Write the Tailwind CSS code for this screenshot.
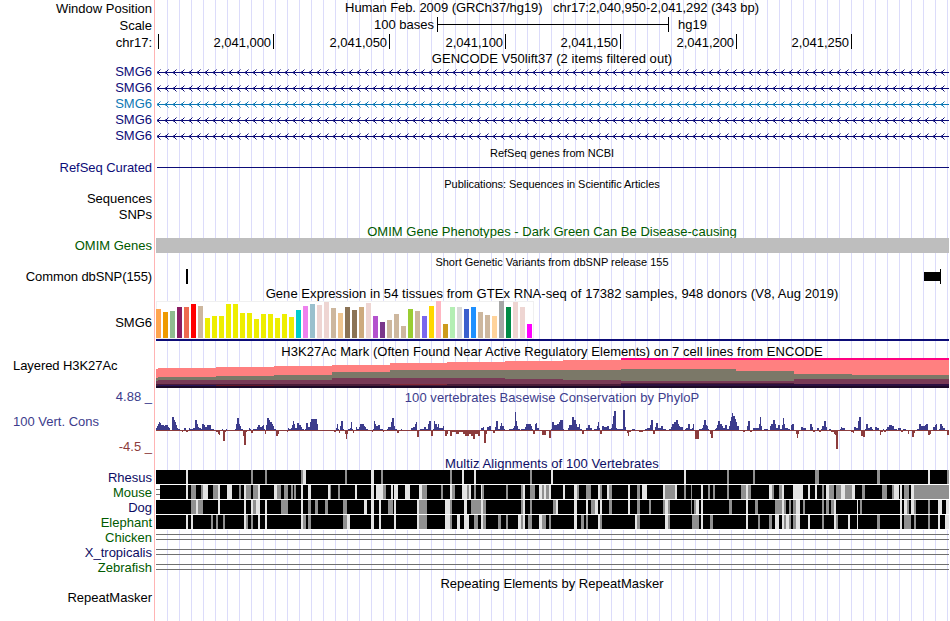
<!DOCTYPE html>
<html lang="en">
<head>
<meta charset="utf-8">
<title>chr17:2,040,950-2,041,292</title>
<script src="https://cdn.jsdelivr.net/npm/@tailwindcss/browser@4"></script>
</head>
<body class="bg-white">
<main class="relative flex h-[621px] w-[949px] flex-col overflow-hidden bg-[repeating-linear-gradient(90deg,#dcdcfa_0_1px,transparent_1px_12px)] bg-[position:167px_0] bg-no-repeat font-['Liberation_Sans',Arial,sans-serif] text-[13px] whitespace-nowrap text-black before:absolute before:inset-y-0 before:left-[154px] before:w-px before:bg-[#ffb4b4]">

  <!-- ruler -->
  <section class="flex h-[17px] leading-[17px]">
    <div class="w-[152px] shrink-0 text-right">Window Position</div>
    <div class="ml-[3px] flex-1 text-center leading-[15px] tracking-[-0.07px]">Human Feb. 2009 (GRCh37/hg19) &nbsp; chr17:2,040,950-2,041,292 (343 bp)</div>
  </section>
  <section class="flex h-[17px] leading-[17px]">
    <div class="w-[152px] shrink-0 text-right">Scale</div>
    <div class="ml-[3px] flex flex-1 leading-[15px]">
      <div class="w-[279px] text-right">100 bases</div>
      <div class="ml-[3px] flex h-[15px] w-[232px] items-center border-x border-black"><div class="h-px w-full bg-black"></div></div>
      <div class="ml-[9px]">hg19</div>
    </div>
  </section>
  <section class="flex h-[17px] leading-[17px]">
    <div class="w-[152px] shrink-0 text-right">chr17:</div>
    <div class="ml-[3px] flex h-[15px] flex-1 text-right tracking-[-0.05px]">
      <div class="w-[4px] border-r border-black"></div>
      <div class="w-[115px] border-r border-black pr-[2px]">2,041,000</div>
      <div class="w-[116px] border-r border-black pr-[2px]">2,041,050</div>
      <div class="w-[116px] border-r border-black pr-[2px]">2,041,100</div>
      <div class="w-[115px] border-r border-black pr-[2px]">2,041,150</div>
      <div class="w-[116px] border-r border-black pr-[2px]">2,041,200</div>
      <div class="w-[115px] border-r border-black pr-[2px]">2,041,250</div>
    </div>
  </section>

  <!-- gene tracks -->
  <section class="ml-[155px] h-[13px] text-center leading-[15px] tracking-[0.05px]">GENCODE V50lift37 (2 items filtered out)</section>
  <section class="flex h-[80px]">
    <div class="w-[152px] shrink-0 text-right leading-[16px] text-[#0c0c78]">
      <div>SMG6</div><div>SMG6</div><div class="text-[#0c78b4]">SMG6</div><div>SMG6</div><div>SMG6</div>
    </div>
    <svg id="genes" class="ml-[3px] h-[80px] w-[794px]" viewBox="155 0 794 80" shape-rendering="crispEdges"></svg>
  </section>
  <section class="ml-[155px] h-[16px] text-center text-[11px] leading-[19px]">RefSeq genes from NCBI</section>
  <section class="flex h-[15px] items-center">
    <div class="w-[152px] shrink-0 text-right leading-[15px] tracking-[-0.06px] text-[#0c0c78]">RefSeq Curated</div>
    <div class="ml-[5px] h-px flex-1 bg-[#0c0c78]"></div>
  </section>
  <section class="ml-[155px] h-[16px] text-center text-[11px] leading-[18px] tracking-[-0.05px]">Publications: Sequences in Scientific Articles</section>
  <section class="h-[33px] w-[152px] text-right leading-[16px]"><div>Sequences</div><div>SNPs</div></section>
  <section class="ml-[155px] h-[14px] text-center leading-[15px] tracking-[0.02px] text-[#005a00]">OMIM Gene Phenotypes - Dark Green Can Be Disease-causing</section>
  <section class="flex h-[15px]">
    <div class="w-[152px] shrink-0 text-right leading-[15px] text-[#005a00]">OMIM Genes</div>
    <div class="ml-[4px] flex-1 bg-[#bebebe]"></div>
  </section>
  <section class="ml-[155px] h-[16px] text-center text-[11px] leading-[18px]">Short Genetic Variants from dbSNP release 155</section>
  <section class="flex h-[15px] items-center">
    <div class="w-[152px] shrink-0 text-right leading-[15px] tracking-[-0.1px]">Common dbSNP(155)</div>
    <div class="ml-[34px] h-[15px] w-[2px] bg-black"></div>
    <div class="ml-[736px] h-[9px] w-[16px] bg-black"></div>
    <div class="h-[15px] w-px bg-black"></div>
  </section>

  <!-- GTEx -->
  <section class="ml-[155px] h-[17px] text-center leading-[19px] tracking-[0.06px]">Gene Expression in 54 tissues from GTEx RNA-seq of 17382 samples, 948 donors (V8, Aug 2019)</section>
  <section class="flex h-[43px]">
    <div class="w-[152px] shrink-0 text-right leading-[43px]">SMG6</div>
    <svg id="gtex" class="ml-[3px] h-[43px] w-[794px]" viewBox="155 301 794 43" shape-rendering="crispEdges"></svg>
  </section>

  <!-- H3K27Ac -->
  <section class="ml-[155px] h-[14px] text-center leading-[15px] tracking-[0.045px]">H3K27Ac Mark (Often Found Near Active Regulatory Elements) on 7 cell lines from ENCODE</section>
  <section class="flex h-[30px]">
    <div class="w-[155px] shrink-0 pl-[13px] leading-[16px] tracking-[-0.07px]">Layered H3K27Ac</div>
    <svg id="h3k" class="h-[30px] w-[794px]" viewBox="155 358 794 30" shape-rendering="crispEdges"></svg>
  </section>

  <!-- PhyloP -->
  <section class="flex h-[69px] text-[#3c3c8c]">
    <div class="flex w-[155px] shrink-0 flex-col pr-[3px] pl-[13px]">
      <div class="h-[25px] text-right leading-[18px]">4.88 _</div>
      <div class="h-[25px] leading-[18px]">100 Vert. Cons</div>
      <div class="h-[19px] text-right leading-[18px] text-[#8c3c3c]">-4.5 _</div>
    </div>
    <div class="flex flex-1 flex-col">
      <div class="h-[19px] text-center leading-[19px] tracking-[0.05px]">100 vertebrates Basewise Conservation by PhyloP</div>
      <svg id="phylop" class="h-[50px] w-[794px]" viewBox="155 407 794 50" shape-rendering="crispEdges"></svg>
    </div>
  </section>

  <!-- Multiz -->
  <section class="ml-[155px] h-[13px] text-center leading-[14px] tracking-[0.08px] text-[#0c0c64]">Multiz Alignments of 100 Vertebrates</section>
  <section class="flex h-[105px]">
    <div class="w-[152px] shrink-0 text-right leading-[15px] text-[#0c0c64]">
      <div>Rhesus</div><div class="text-[#005a00]">Mouse</div><div>Dog</div><div class="text-[#005a00]">Elephant</div><div class="text-[#005a00]">Chicken</div><div>X_tropicalis</div><div class="text-[#005a00]">Zebrafish</div>
    </div>
    <svg id="multiz" class="ml-[3px] h-[105px] w-[794px]" viewBox="155 470 794 105" shape-rendering="crispEdges"></svg>
  </section>

  <!-- RepeatMasker -->
  <section class="ml-[155px] h-[15px] text-center leading-[18px] tracking-[0.02px]">Repeating Elements by RepeatMasker</section>
  <section class="h-[16px] w-[152px] text-right leading-[16px]">RepeatMasker</section>
</main>

<script>
const rect = (x, y, w, h, c) => `<rect x="${x}" y="${y}" width="${w}" height="${h}" fill="${c}"/>`;
const put = (id, s) => { document.getElementById(id).innerHTML = s; };

// Gene introns: a line with strand chevrons every 8px
let s = '';
['#0c0c78', '#0c0c78', '#0c78b4', '#0c0c78', '#0c0c78'].forEach((c, i) => {
  const y = i * 16 + 8;
  s += rect(157, y, 792, 1, c);
  for (let x = 157; x < 949; x += 8) {
    s += rect(x + 1, y - 1, 1, 3, c);
    s += rect(x + 2, y - 2, 1, 1, c) + rect(x + 2, y + 2, 1, 1, c);
    s += `<g opacity=".5">${rect(x, y - 1, 1, 3, c)}${rect(x + 3, y - 3, 1, 1, c)}${rect(x + 3, y + 3, 1, 1, c)}</g>`;
  }
});
put('genes', s);

// GTEx: [colour, top offset]
const Y = '#eeee00', T = '#cdb79e', P = '#eed5d2';
const tissues = [['#ffa54f',24],['#ee9a00',27],['#8fbc8f',26],['#8b1c62',22],['#ee6a50',22],['#ff0000',19],[T,21],
 [Y,33],[Y,31],[Y,31],[Y,19],[Y,19],[Y,28],[Y,28],[Y,34],[Y,29],[Y,29],[Y,33],[Y,29],[Y,32],
 ['#00cdcd',25],['#ee82ee',21],['#9ac0cd',19],[P,20],[P,17],[T,23],['#eec591',28],['#8b7355',22],['#8b7355',25],['#cdaa7d',22],
 [P,18],['#b452cd',31],['#7a378b',37],[T,35],[T,29],[T,41],['#9acd32',24],[T,26],['#7a67ee',31],['#ffd700',21],['#ffb6c1',16],
 ['#cd9b1d',39],['#b4eeb4',22],['#d9d9d9',22],['#3a5fcd',24],['#1e90ff',22],[T,27],[T,30],['#ffd39b',31],['#a6a6a6',16],
 ['#008b45',22],[P,17],[P,22],['#ff00ff',39]];
s = rect(156, 301, 378, 38, '#f0f0f0') + rect(157, 302, 376, 36, '#ffffff');
tissues.forEach(([c, t], i) => { s += rect(156 + i * 7, 285 + t, 5, 53 - t, c); });
s += rect(156, 339, 793, 2, '#0c0c78');
put('gtex', s);

// H3K27Ac: x, then the top of each layer
const layers = [[156,369,378,381,384],[158,368,377,380,384],[216,367,376,380,384],[274,366,375,380,384],[332,365,372,378,384],
 [390,363,370,378,384],[447,362,370,378,384],[505,361,370,379,384],[563,360,370,380,384],[621,359,369,381,383],
 [679,359,369,381,383],[736,359,371,381,383],[794,359,374,379,384],[852,359,375,379,384],[910,359,375,379,384],[949]];
s = '';
layers.slice(0, -1).forEach((l, i) => {
  const w = layers[i + 1][0] - l[0];
  ['#ff8080', '#7b7868', '#783a56', '#4a1c38'].forEach((c, k) => { s += rect(l[0], l[k + 1], w, 388 - l[k + 1], c); });
});
s += rect(621, 358, 328, 2, '#ff0080') + rect(156, 386, 793, 2, '#1c0a28');
s += rect(158, 385, 58, 1, '#2c1458') + rect(216, 385, 58, 1, '#641428') + rect(390, 384, 57, 1, '#822838') + rect(621, 384, 328, 2, '#2c1040');
put('h3k', s);

// PhyloP: step profile "x:height", height above (+) or below (-) the baseline
const prof = `156:2 157:4 158:6 159:8 160:7 161:5 164:4 165:5 168:3 169:2 170:-1 172:13 174:10 175:8 176:5 177:2 178:1 180:-1 182:-2 183:-1 184:2 186:-2 188:-1 189:2 190:1 193:2 195:10 197:6 198:3 199:2 201:1 202:6 204:5 205:3 207:5 211:1 214:-1 216:-2 218:-4 219:-5 220:-1 222:1 223:-11 225:-2 226:1 227:-1 235:1 236:6 237:12 239:6 240:4 241:1 243:-6 244:-15 246:-2 247:-1 249:2 250:1 251:-3 253:1 257:3 258:5 260:3 262:4 263:5 264:1 265:-4 266:5 267:12 269:10 270:8 272:6 273:4 274:1 276:-6 278:-4 279:-1 287:-2 288:2 289:1 291:2 292:5 293:9 294:6 295:2 297:7 299:5 301:3 302:1 304:-1 305:1 306:7 308:3 310:8 311:11 317:6 318:-1 334:-2 336:2 337:6 338:1 339:-3 340:4 341:9 343:1 344:-1 345:-4 346:-9 347:-4 348:1 350:2 351:8 352:1 353:-3 354:-1 356:3 357:1 359:3 360:6 364:4 365:3 366:1 368:-1 372:-2 373:1 374:9 375:6 376:4 378:5 380:1 383:-2 384:-1 387:1 388:3 391:8 392:12 394:4 395:1 397:-3 399:-1 401:1 402:-1 411:2 413:3 415:6 416:8 417:-7 419:-1 420:1 424:3 426:1 428:6 429:9 431:-6 433:1 434:9 435:6 437:3 438:6 439:2 442:2 443:4 444:-1 445:-6 447:-4 448:-1 450:-6 452:-2 456:-4 459:-2 463:-4 465:-6 469:-4 471:-6 473:-9 475:-4 478:-6 480:-1 481:2 483:3 484:-13 486:-4 487:3 489:4 491:-1 493:-3 495:3 496:9 498:1 500:4 501:7 502:4 504:1 505:-1 509:1 513:2 514:4 515:18 516:9 517:4 518:1 520:-1 521:1 525:3 526:6 531:4 532:1 533:-4 535:6 536:7 537:2 539:-1 542:-5 546:-1 549:-8 551:1 552:8 554:5 557:6 559:8 560:10 563:1 564:-1 568:2 569:5 572:13 574:10 576:6 577:3 579:6 580:1 582:-4 584:-1 586:2 588:5 590:2 592:-1 594:1 597:4 598:8 599:2 600:-4 602:4 604:3 607:4 609:1 611:2 612:6 613:14 614:19 616:2 617:1 623:20 625:3 626:-1 627:-3 628:-6 629:-2 631:-1 632:1 635:-1 639:-2 643:-1 645:1 647:2 650:5 651:10 653:-4 655:3 656:7 658:2 661:4 663:1 666:-1 669:1 671:3 672:6 674:8 676:10 678:6 679:4 680:3 683:-1 685:1 686:2 688:6 690:1 692:2 693:6 694:-1 695:-9 699:1 702:2 703:5 704:10 706:5 707:4 708:1 709:-1 710:-4 711:-8 713:-1 715:1 716:2 717:5 718:9 720:6 722:4 723:2 725:5 727:1 729:4 730:9 731:13 732:17 733:14 735:11 736:8 737:4 739:-1 743:-2 745:-1 747:4 748:9 750:-2 752:-1 753:2 759:6 760:13 761:4 762:-1 764:1 768:-1 770:4 771:6 773:10 775:6 776:2 778:5 780:1 782:5 783:12 784:6 785:2 788:1 790:-1 791:5 792:6 794:-1 796:-4 797:-8 798:-4 799:-1 801:3 803:2 806:-1 810:6 812:3 813:-2 815:-1 817:2 819:-2 821:1 822:4 824:9 826:3 827:-1 829:1 831:-2 834:-4 835:-5 836:-19 838:-1 840:1 841:3 842:2 845:-1 851:-2 853:-3 854:3 856:2 858:9 859:13 861:-6 863:-7 865:1 866:6 868:2 870:3 872:1 873:-1 875:3 877:2 879:-1 880:-5 881:-2 883:1 884:-2 886:1 887:3 889:5 892:4 894:1 897:-1 898:2 901:-2 903:1 906:-1 908:-4 909:-1 912:-7 914:-3 915:-1 917:1 919:6 921:4 925:5 926:6 928:-5 930:-4 931:-1 933:3 935:5 936:6 937:-1 939:1 940:6 942:4 943:2 945:-1 947:-5 949:0`
  .split(' ').map(p => p.split(':').map(Number));
s = '';
for (let i = 0; i < prof.length - 1; i++) {
  const [x, h] = prof[i], w = prof[i + 1][0] - x;
  s += h > 0 ? rect(x, 430 - h, w, h, '#3c3c8c') : rect(x, 430, w, -h, '#8c3c3c');
}
s = rect(156, 430, 793, 1, '#8c3c3c') + s;
put('phylop', s);

// Multiz: "x,width" plus L (light) or G (grey)
const rows = [
 '186,2L 251,2G 265,2G 301,2G 303,3L 345,2G 371,3L 381,2G 450,2G 462,2L 474,2L 530,2G 551,2L 684,2L 727,2G 753,2G 815,4G 877,3G 928,2L 947,2G',
 '186,2L 191,5G 201,2G 203,5L 213,5G 218,2L 227,5L 239,2G 244,2L 246,5G 253,5G 258,2L 274,3L 277,4G 284,4G 291,2G 294,2G 301,2L 308,3L 328,2L 330,1G 338,2G 355,2L 371,3L 376,7L 383,3G 391,2L 394,4L 405,5L 419,3L 422,5G 441,2G 450,2L 452,3G 462,5L 467,2G 469,2L 474,2G 481,1L 482,2G 506,2G 521,2G 523,2L 530,5G 539,3L 542,2G 544,2L 546,3G 549,2L 563,2L 574,3L 577,2G 586,5G 598,2L 600,2G 607,2L 609,3G 628,2L 637,3G 642,5L 663,2L 665,10G 675,2L 684,2G 691,1G 701,2L 708,2G 713,2G 727,2G 741,5G 746,2L 748,3G 769,3L 772,2G 779,3G 782,2L 793,10L 808,2L 815,2L 822,2G 826,3L 829,5G 836,5G 841,4L 845,7G 852,3L 862,3G 882,5G 892,2G 894,5L 900,2L 904,5G 911,3L 914,35G',
 '191,5G 196,2L 198,5G 218,2L 244,2L 251,2L 253,3G 256,4L 265,2L 281,7G 301,2L 308,3G 315,3G 325,3G 343,4G 364,3L 371,3L 379,2L 388,5G 394,2L 417,2L 419,8G 445,5L 450,2G 464,3L 471,3G 474,7G 481,2L 483,3G 521,2G 523,2L 530,2G 553,3G 556,2L 574,3L 586,2L 591,4G 595,3L 600,2L 609,3G 628,2L 637,3G 649,2G 663,2G 665,3L 668,2G 691,1G 694,2G 696,3L 701,2L 729,3G 746,2L 755,3G 775,7G 782,2L 784,2G 789,2G 793,3G 796,4L 803,2G 822,2G 826,3G 831,3G 834,2L 857,1L 860,2G 900,2L 904,3L 907,2G 911,3L 914,2G 928,2G 938,4L 946,3L',
 '186,2L 191,2L 211,2G 216,2G 223,2G 244,2L 246,2G 251,2G 258,2L 265,2L 301,2L 303,3G 308,3G 343,4G 347,3L 371,3L 379,2L 394,2L 417,2L 419,8G 445,5L 450,2G 457,3L 464,5L 474,4G 481,2L 483,3G 498,3G 506,2G 518,3L 521,2G 523,2L 528,4G 539,3L 542,4G 549,2G 574,3L 581,3G 586,2G 598,2L 600,2G 635,2L 637,3G 665,3L 668,2G 692,7G 701,2L 710,3G 746,2L 758,2G 769,3G 775,4L 782,2L 784,2G 786,3L 789,2G 793,3G 796,4L 808,2L 822,2G 834,2L 836,2G 848,2L 857,1L 877,3G 900,2L 904,7G 914,2G 928,2G 938,2L 945,4L'];
s = '';
rows.forEach((r, i) => {
  const y = 470 + i * 15, x0 = i === 1 ? 160 : 156;
  s += rect(156, y, 793, 15, '#ffffff') + rect(x0, y, 949 - x0, 14, '#000000');
  r.split(' ').forEach(b => {
    const [x, w] = b.slice(0, -1).split(',');
    s += rect(x, y, w, 14, b.endsWith('L') ? '#e4e4e4' : '#909090');
  });
});
s += rect(156, 489, 4, 1, '#707070') + rect(156, 494, 4, 1, '#707070');
[534, 539, 549, 554, 564, 569].forEach(y => { s += rect(156, y, 793, 1, '#707070'); });
put('multiz', s);
</script>
</body>
</html>
